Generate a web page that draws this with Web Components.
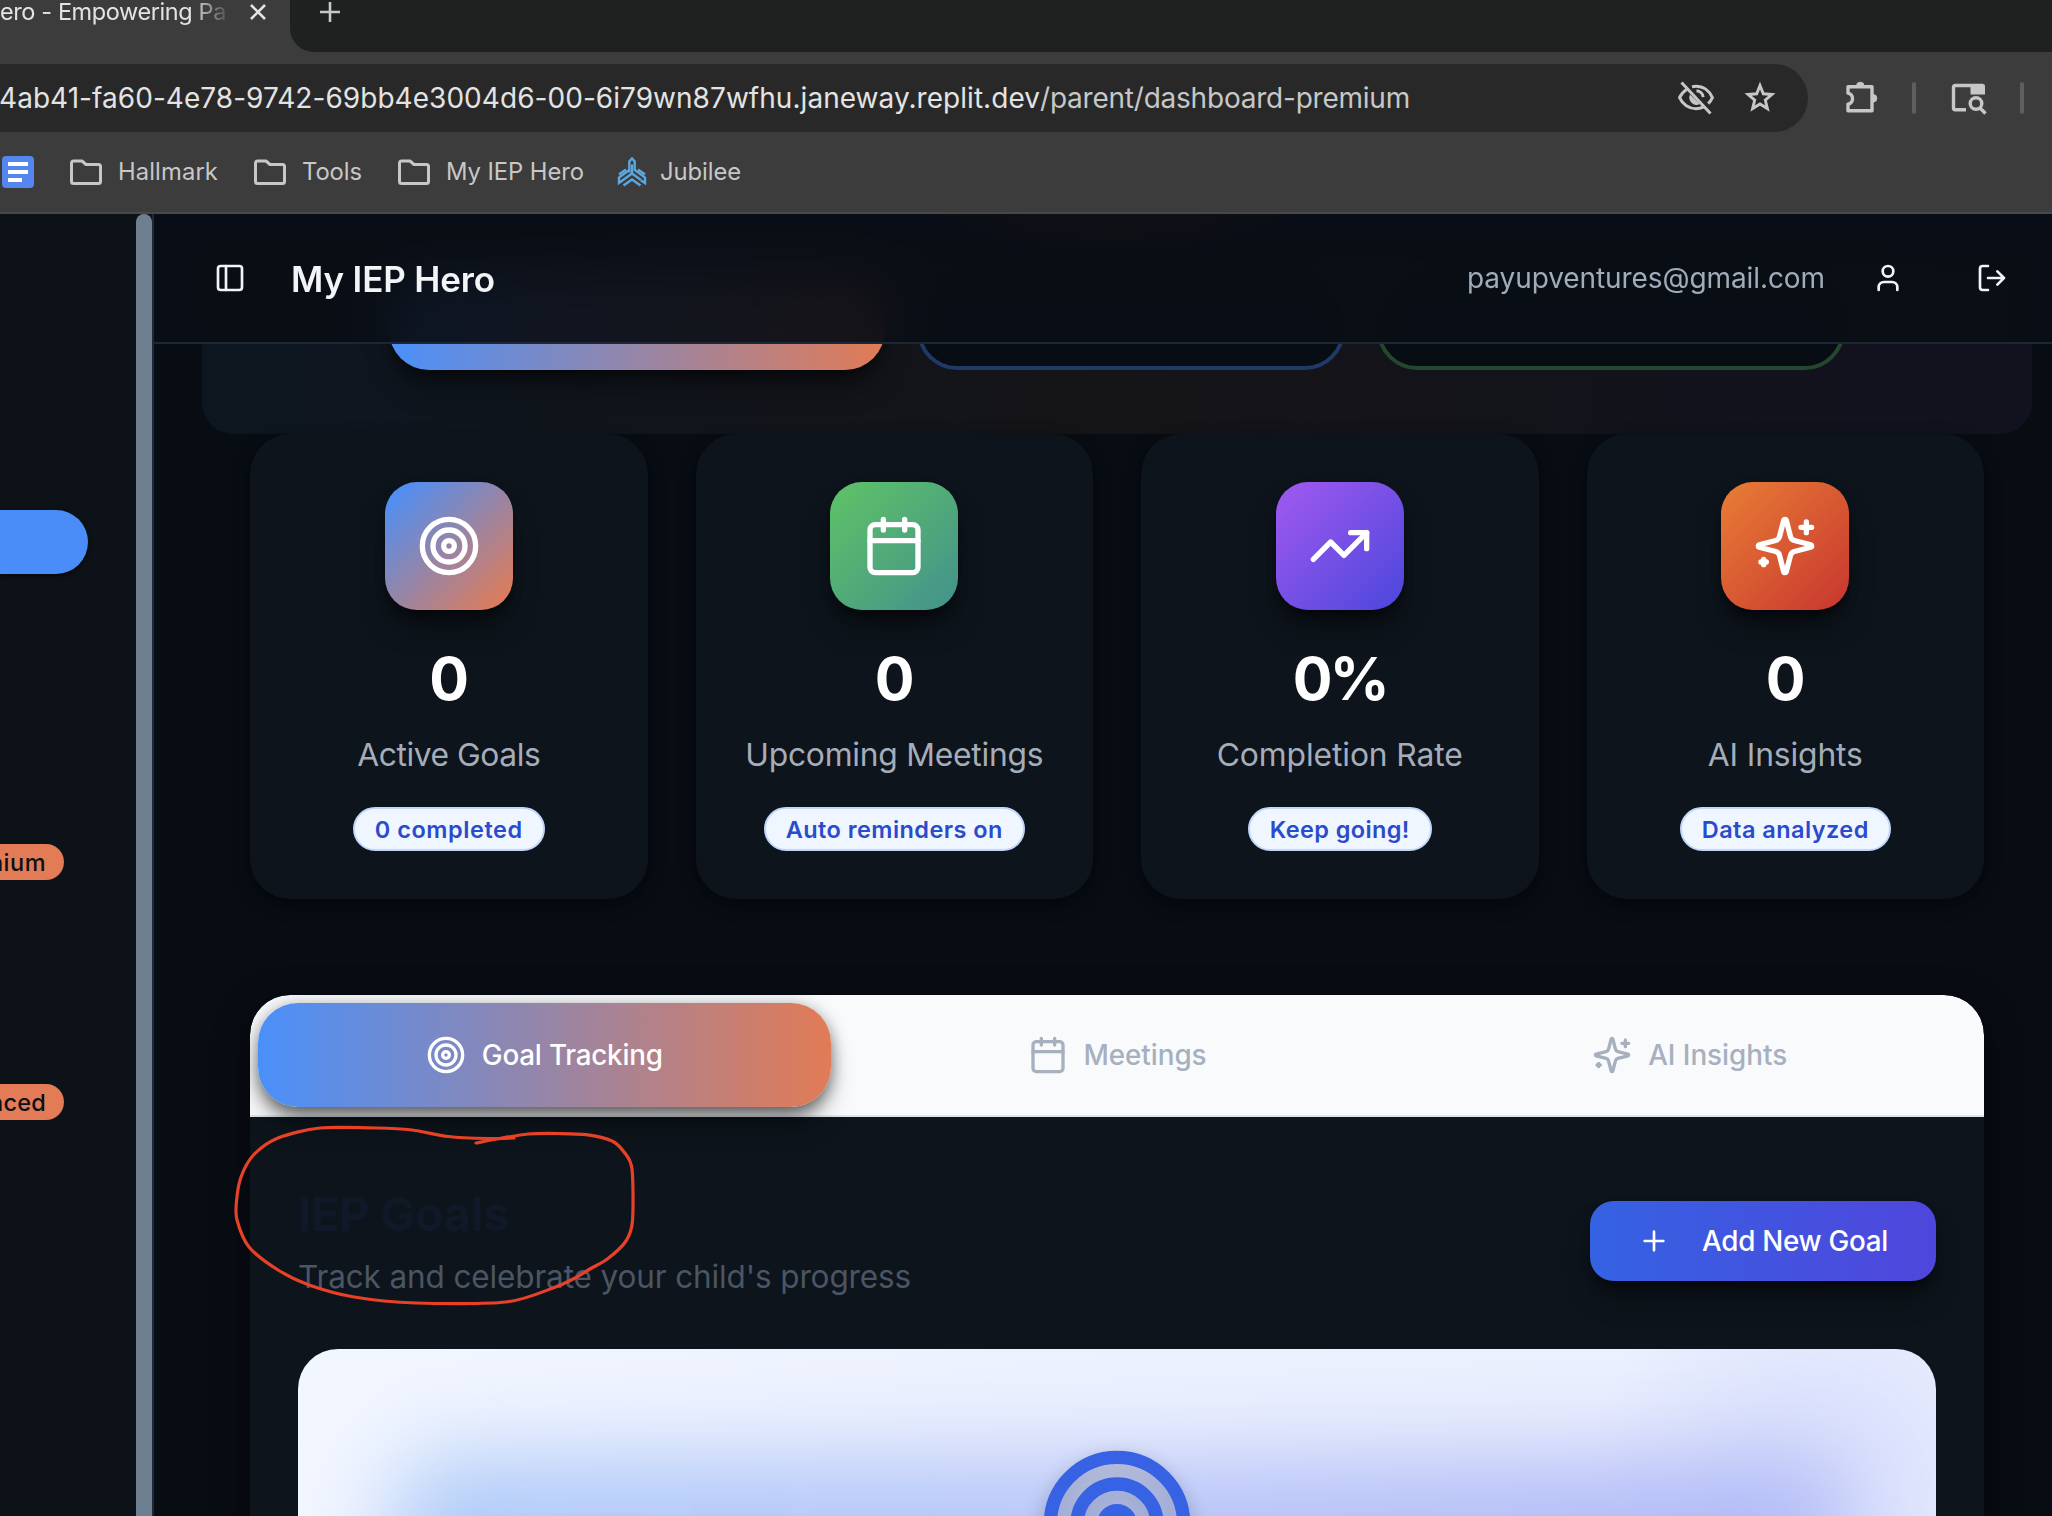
<!DOCTYPE html>
<html lang="en">
<head>
<meta charset="utf-8">
<title>My IEP Hero - Empowering Parents</title>
<style>
html,body{margin:0;padding:0}
body{width:2052px;height:1516px;overflow:hidden;background:#080d14;font-family:Inter,"Liberation Sans",sans-serif;}
</style>
</head>
<body>
<app-window></app-window>
<script>
const define = (name, html, setup) => {
  const t = document.createElement('template');
  t.innerHTML = html;
  customElements.define(name, class extends HTMLElement {
    connectedCallback() {
      if (this.shadowRoot) return;
      this.attachShadow({ mode: 'open' }).append(t.content.cloneNode(true));
      if (setup) setup(this, this.shadowRoot);
    }
  });
};

/* icon set: outline icons on a 24-unit grid */
const ICONS = {
  target: '<circle cx="12" cy="12" r="10"/><circle cx="12" cy="12" r="6"/><circle cx="12" cy="12" r="2"/>',
  calendar: '<path d="M8 2v4M16 2v4"/><rect width="18" height="18" x="3" y="4" rx="2"/><path d="M3 10h18"/>',
  trend: '<path d="M22 7 13.5 15.5 8.5 10.5 2 17"/><path d="M16 7h6v6"/>',
  sparkles: '<path d="M9.937 15.5A2 2 0 0 0 8.5 14.063l-6.135-1.582a.5.5 0 0 1 0-.962L8.5 9.936A2 2 0 0 0 9.937 8.5l1.582-6.135a.5.5 0 0 1 .963 0L14.063 8.5A2 2 0 0 0 15.5 9.937l6.135 1.581a.5.5 0 0 1 0 .964L15.5 14.063a2 2 0 0 0-1.437 1.437l-1.582 6.135a.5.5 0 0 1-.963 0z"/><path d="M20 3v4M22 5h-4M4 17v2M5 18H3"/>',
  panel: '<rect width="18" height="18" x="3" y="3" rx="2"/><path d="M9 3v18"/>',
  user: '<path d="M19 21v-2a4 4 0 0 0-4-4H9a4 4 0 0 0-4 4v2"/><circle cx="12" cy="7" r="4"/>',
  logout: '<path d="M9 21H5a2 2 0 0 1-2-2V5a2 2 0 0 1 2-2h4"/><path d="m16 17 5-5-5-5M21 12H9"/>',
  plus: '<path d="M5 12h14M12 5v14"/>'
};

define('line-icon', `<style>:host{display:block;flex:none}svg{display:block;width:100%;height:100%}</style>
<svg viewBox="0 0 24 24" fill="none" stroke="currentColor" stroke-width="2" stroke-linecap="round" stroke-linejoin="round"></svg>`,
(el, r) => { const s = el.getAttribute('size'); el.style.width = el.style.height = s + 'px'; r.querySelector('svg').innerHTML = ICONS[el.getAttribute('name')]; });

define('browser-tabs', `<style>
:host{display:flex;height:52px;background:#3c3c3c;color:#e3e3e3}
.tab{width:290px;display:flex;align-items:center;height:24px}
.t{width:226px;display:flex;justify-content:flex-end;overflow:hidden;font-size:23.500px;line-height:30px;white-space:nowrap;-webkit-mask:linear-gradient(90deg,#000 190px,transparent 232px);mask:linear-gradient(90deg,#000 190px,transparent 232px)}
.x{width:18px;height:18px;margin-left:23px}
.rest{flex:1;background:#1f2120;border-bottom-left-radius:24px}
.p{display:block;width:22px;height:22px;margin:1px 0 0 29px}
</style>
<div class="tab"><div class="t"><ui-fit w="226">ero - Empowering Pa</ui-fit></div>
<svg class="x" viewBox="0 0 18 18" stroke="#e3e3e3" stroke-width="2.6"><path d="M2 2l14 14M16 2L2 16"/></svg></div>
<div class="rest"><svg class="p" viewBox="0 0 22 22" stroke="#c7c7c7" stroke-width="2.6"><path d="M11 1v20M1 11h20"/></svg></div>`);

define('browser-toolbar', `<style>
:host{display:flex;align-items:center;height:68px;padding:12px 0;background:#3c3c3c;color:#c7c7c7}
.omni{box-sizing:border-box;width:1808px;height:68px;background:#282828;border-radius:0 34px 34px 0;display:flex;align-items:center;font-size:28px;white-space:nowrap;color:#e3e3e3;flex:none}
.omni ui-fit:first-child{margin-left:-1px}
.path{color:#c7c7c7}
svg{display:block;flex:none;overflow:visible}
.eye{margin-left:268px}.star{margin-left:30px}
.sep{width:4px;height:32px;border-radius:2px;background:#5f5f5f}
</style>
<div class="omni"><ui-fit w="1041">4ab41-fa60-4e78-9742-69bb4e3004d6-00-6i79wn87wfhu.janeway.replit.dev</ui-fit><ui-fit class="path" w="370">/parent/dashboard-premium</ui-fit>
<svg class="eye" width="36" height="36" viewBox="0 0 36 36" fill="none" stroke="#c7c7c7" stroke-width="3"><path d="M8.500 9.500C5 12 2.800 14.800 1.600 17.600c3 7 9.500 11.200 16.400 11.200 2.600 0 5.100-.6 7.300-1.600"/><path d="M14 6.800c1.300-.3 2.600-.5 4-.5 7 0 13.300 4.300 16.400 11.300-1 2.300-2.400 4.400-4.200 6.100"/><path d="M18.500 10.700c3.700.3 6.400 3 6.700 6.500"/><path d="M12 14.500a7.300 7.300 0 0 0 9.800 9.600z" fill="#c7c7c7" stroke="none"/><path d="M3.500 2.500l29 31"/></svg>
<svg class="star" width="32" height="32" viewBox="0 0 32 32" fill="none" stroke="#c7c7c7" stroke-width="2.900"><path d="M16 3.500l3.300 8.300 8.600.7-6.600 5.600 2.100 8.500-7.400-4.600-7.400 4.600 2.100-8.500-6.600-5.600 8.600-.7z"/></svg></div>
<svg width="36" height="36" viewBox="0 0 36 36" fill="none" stroke="#c7c7c7" stroke-width="3.400" stroke-linejoin="round" style="margin-left:35px"><path d="M5 6.700h24v24H5v-6.500c6-1.500 6-9.500 0-11z"/><path d="M13.500 6a3.800 3.800 0 0 1 7.600 0zM30 14.500a3.800 3.800 0 0 1 0 7.600z" fill="#c7c7c7" stroke-width="1"/></svg>
<div class="sep" style="margin-left:33px"></div>
<svg width="36" height="36" viewBox="0 0 36 36" fill="none" stroke="#c7c7c7" stroke-width="3.400" style="margin-left:34px"><path d="M16 29.800H5.200a1.700 1.700 0 0 1-1.700-1.700V7.200a1.700 1.700 0 0 1 1.700-1.700H33"/><path d="M20.500 4H33a2 2 0 0 1 2 2v8.500H20.500z" fill="#c7c7c7" stroke="none"/><circle cx="26" cy="23.500" r="5.800"/><path d="M30 28l5.500 5.500"/></svg>
<div class="sep" style="margin-left:34px"></div>`);

define('bookmark-folder', `<style>:host{display:flex;align-items:center;gap:16px}svg{display:block;flex:none}</style>
<svg width="32" height="26" viewBox="0 0 32 26" fill="none" stroke="#c7c7c7" stroke-width="3" stroke-linejoin="round"><path d="M3.500 2h8.500l4 3.500h12.500a2 2 0 0 1 2 2V22.500a2 2 0 0 1-2 2H3.500a2 2 0 0 1-2-2V4a2 2 0 0 1 2-2z"/></svg><slot></slot>`);

define('bookmarks-bar', `<style>
:host{display:flex;align-items:center;box-sizing:border-box;height:70px;padding:0 0 12px 2px;background:#3c3c3c;border-bottom:2px solid #484848;color:#c7c7c7;font-size:23.800px;line-height:30px;white-space:nowrap}
.docs{width:32px;height:32px;border-radius:4px;background:#5586ed;display:flex;flex-direction:column;justify-content:center;gap:4px;margin-right:36px;box-sizing:border-box;padding-left:6px}
.docs i{display:block;width:20px;height:4px;background:#fff}.docs i:last-child{width:14px}
bookmark-folder{margin-right:36px}
</style>
<div class="docs"><i></i><i></i><i></i></div>
<bookmark-folder><ui-fit w="100">Hallmark</ui-fit></bookmark-folder>
<bookmark-folder><ui-fit w="60">Tools</ui-fit></bookmark-folder>
<bookmark-folder style="margin-right:33px"><ui-fit w="138">My IEP Hero</ui-fit></bookmark-folder>
<svg width="30" height="30" viewBox="0 0 30 30" fill="none" stroke="#5ba7e0" stroke-width="2.400"><path d="M12.300 15.500V4.500L15 1.500l2.700 3V13L28 20.500V26l-4-2.500"/><path d="M12.300 13L2 20.500V26l13-9.500 9 6.500"/><path d="M6.500 28.500L15 22.500l8.500 6M15 7.500v10M2 17.500l7-5M28 17.500l-7-5"/></svg>
<ui-fit w="81" style="margin-left:13px">Jubilee</ui-fit>`);

define('side-nav', `<style>
:host{display:flex;flex:none;width:154px;box-sizing:border-box;border-right:2px solid #1c2938;background:#0d1218}
.list{width:136px;display:flex;flex-direction:column;overflow:hidden;padding-top:296px;align-items:flex-start}
.active{width:88px;height:64px;background:#4a8df8;border-radius:0 32px 32px 0;box-shadow:0 2px 5px #0009;flex:none}
.tag{box-sizing:border-box;width:64px;height:36px;flex:none;border-radius:0 18px 18px 0;background:#e27b56;color:#0b1017;display:flex;justify-content:flex-end;align-items:center;padding-right:18px;font-size:23.500px;font-weight:500;overflow:hidden;white-space:nowrap}
.bar{width:16px;background:#6e7f90;border-radius:8px 8px 0 0}
</style>
<div class="list"><div class="active"></div><div class="tag" style="margin-top:270px"><ui-fit w="57">nium</ui-fit></div><div class="tag" style="margin-top:204px"><ui-fit w="57">nced</ui-fit></div></div>
<div class="bar"></div>`);

define('app-header', `<style>
:host{display:flex;align-items:center;box-sizing:border-box;height:130px;flex:none;position:relative;z-index:2;padding:0 44px 0 60px;border-bottom:2px solid #1b2735;background:radial-gradient(ellipse 190px 40px at 960px 0,#14131677 40%,transparent),rgba(10,14,21,.94);backdrop-filter:blur(24px);color:#f3f4f6}
h1{margin:0 auto 0 45px;font-size:35px;font-weight:600;line-height:48px;padding-top:1px;white-space:nowrap}
.mail{font-size:28px;color:#a1acba;margin-right:47px;white-space:nowrap}
</style>
<line-icon name="panel" size="32"></line-icon><h1><ui-fit w="204">My IEP Hero</ui-fit></h1>
<ui-fit class="mail" w="358">payupventures@gmail.com</ui-fit>
<line-icon name="user" size="32" style="margin-right:72px"></line-icon><line-icon name="logout" size="32"></line-icon>`);

define('hero-panel', `<style>
:host{display:flex;align-items:flex-end;justify-content:center;gap:32px;box-sizing:border-box;height:190px;margin:-100px 20px 0 48px;padding-bottom:64px;flex:none;border-radius:0 0 32px 32px;background:linear-gradient(90deg,#0d1620,#151417 50%,#11121f)}
div{box-sizing:border-box;height:96px;border-radius:40px}
.a{width:496px;background:linear-gradient(90deg,#4a90fa,#e27b56);box-shadow:0 20px 30px -6px #0006,0 8px 12px -4px #0007}
.b{width:428px;border:4px solid #1f3a66;background:#080d14}
.c{width:468px;border:4px solid #25462f;background:#080d14}
</style><div class="a"></div><div class="b"></div><div class="c"></div>`);

define('stat-card', `<style>
:host{display:flex;flex:1;flex-direction:column;align-items:center;box-sizing:border-box;height:465px;padding:48px 0;border-radius:40px;background:#0d141b;box-shadow:0 6px 18px #0007}
.ic{width:128px;height:128px;border-radius:32px;display:flex;align-items:center;justify-content:center;color:#fff;box-shadow:0 20px 30px -6px #0006,0 8px 12px -4px #0008}
.num{margin-top:33px;line-height:72px;font-size:59px;font-weight:700;color:#fff}
.lab{margin-top:16px;line-height:48px;font-size:31.800px;color:#a5adba;white-space:nowrap}
.tag{margin-top:28px;box-sizing:border-box;height:44px;display:flex;align-items:center;padding:0 20px;border:2px solid #bfd7fb;border-radius:22px;background:#eff6ff;color:#2a4bcb;font-size:23.500px;font-weight:600;white-space:nowrap}
</style>
<div class="ic"><line-icon size="64"></line-icon></div><div class="num"><slot name="num"></slot></div><div class="lab"><slot name="label"></slot></div><div class="tag"><slot name="tag"></slot></div>`,
(el, r) => { r.querySelector('.ic').style.background = `linear-gradient(135deg,${el.getAttribute('from')},${el.getAttribute('to')})`;
  const n = document.createElement('line-icon'); n.setAttribute('size', 64); n.setAttribute('name', el.getAttribute('icon')); r.querySelector('line-icon').replaceWith(n); });

define('stat-row', `<style>:host{display:flex;gap:48px;margin:0 68px 0 96px;flex:none}</style>
<stat-card icon="target" from="#4a8ff8 5%" to="#e27b56 95%"><ui-fit slot="num" w="39">0</ui-fit><ui-fit slot="label" w="183">Active Goals</ui-fit><ui-fit slot="tag" w="148">0 completed</ui-fit></stat-card>
<stat-card icon="calendar" from="#5fc366" to="#43918c"><ui-fit slot="num" w="39">0</ui-fit><ui-fit slot="label" w="298">Upcoming Meetings</ui-fit><ui-fit slot="tag" w="217">Auto reminders on</ui-fit></stat-card>
<stat-card icon="trend" from="#a259f0" to="#4b47dc"><ui-fit slot="num" w="94">0%</ui-fit><ui-fit slot="label" w="246">Completion Rate</ui-fit><ui-fit slot="tag" w="140">Keep going!</ui-fit></stat-card>
<stat-card icon="sparkles" from="#e87d35" to="#c8362f"><ui-fit slot="num" w="39">0</ui-fit><ui-fit slot="label" w="155">AI Insights</ui-fit><ui-fit slot="tag" w="167">Data analyzed</ui-fit></stat-card>`);

define('panel-tab', `<style>
:host{display:flex;flex:1;align-items:center;justify-content:center;gap:16px;height:104px;border-radius:40px;font-size:27.800px;font-weight:500;color:#a6b0bf;white-space:nowrap}
:host([active]){background:linear-gradient(90deg,#4a90fa,#e27b56);color:#fff;box-shadow:0 20px 30px -6px #0005,0 8px 16px -2px #0006,0 0 18px #0003}
</style><slot></slot>`);

define('empty-state', `<style>
:host{display:flex;justify-content:center;height:260px;overflow:hidden;box-sizing:border-box;padding-top:95px;margin:0 48px;border-radius:40px 40px 0 0;
background:radial-gradient(ellipse 230px 220px at 1520px 130px,#c5cffa77 10%,transparent),linear-gradient(90deg,#f2f6ff,#edf1fe 50%,#eaeefe);isolation:isolate;position:relative}
.glow{position:absolute;z-index:-1;inset:108px 92px -150px 92px;border-radius:60px;background:linear-gradient(90deg,#aecbf8,#b8c5f8 50%,#b0b9f6);filter:blur(44px)}
line-icon{color:#3762e3;filter:drop-shadow(0 8px 10px #0004)}
</style><div class="glow"></div><line-icon name="target" size="160"></line-icon>`);

define('goal-panel', `<style>
:host{display:block;flex:none;height:560px;margin:96px 68px 0 96px;border-radius:40px 40px 0 0;background:#0d141b;box-shadow:0 10px 34px #0009}
.tabs{display:flex;box-sizing:border-box;height:122px;padding:8px;border-bottom:2px solid #dfe4eb;border-radius:40px 40px 0 0;background:#f9fafc}
.clip{overflow:hidden;border-radius:40px 40px 0 0;height:354px}
.head{display:flex;justify-content:space-between;align-items:flex-start;padding:61px 48px 0 48px}
h2{margin:0;font-size:47px;line-height:72px;font-weight:700;color:#111827;white-space:nowrap}
p{margin:3px 0 0;font-size:31.500px;line-height:48px;color:#4b5563;white-space:nowrap}
button{all:unset;box-sizing:border-box;width:346px;height:80px;margin-top:23px;padding-left:48px;display:flex;align-items:center;gap:32px;border-radius:24px;background:linear-gradient(90deg,#3562e3,#4f46dc);color:#fff;font-size:27.800px;font-weight:500;white-space:nowrap;box-shadow:0 20px 30px -6px #0005,0 8px 12px -4px #0008}
</style>
<div class="clip"><div class="tabs">
<panel-tab active><line-icon name="target" size="40"></line-icon><ui-fit w="181">Goal Tracking</ui-fit></panel-tab>
<panel-tab><line-icon name="calendar" size="40"></line-icon><ui-fit w="123">Meetings</ui-fit></panel-tab>
<panel-tab><line-icon name="sparkles" size="40"></line-icon><ui-fit w="139">AI Insights</ui-fit></panel-tab></div>
<div class="head"><div><h2><ui-fit w="211">IEP Goals</ui-fit></h2><p><ui-fit w="613">Track and celebrate your child's progress</ui-fit></p></div>
<button><line-icon name="plus" size="32"></line-icon><ui-fit w="186">Add New Goal</ui-fit></button></div></div>
<empty-state></empty-state>`);

define('pen-mark', `<style>:host{position:absolute;left:0;top:0;width:2052px;height:1516px;z-index:5;pointer-events:none}svg{display:block}</style>
<svg width="2052" height="1516" fill="none" stroke="#e94126" stroke-width="3.200" stroke-linecap="round" stroke-linejoin="round"><path/></svg>`,
(el, r) => {
  const p = [[476,1143],[497,1139],[528,1134],[559,1133.500],[586,1134.700],[612,1141],[624,1152],[632,1169],[632.500,1221],[626,1241],[608,1258.500],[590,1269],[573,1279],[553,1288],[506,1302],[416,1303],[354,1297],[309,1285],[278,1270],[249,1247],[237,1220],[236.500,1201],[241,1177],[253.500,1155],[278,1138],[320,1128],[376,1128],[412,1130],[448,1136.500],[488,1138.500],[514,1138]];
  let d = `M${p[0]}`;
  for (let i = 0; i < p.length - 1; i++) {
    const a = p[i - 1] || p[i], b = p[i], c = p[i + 1], e = p[i + 2] || c, k = 7;
    d += `C${b[0] + (c[0] - a[0]) / k},${b[1] + (c[1] - a[1]) / k} ${c[0] - (e[0] - b[0]) / k},${c[1] - (e[1] - b[1]) / k} ${c}`;
  }
  r.querySelector('path').setAttribute('d', d);
});

define('app-window', `<style>
:host{display:flex;flex-direction:column;width:2052px;height:1516px;overflow:hidden;position:relative}
.body{display:flex;flex:1;min-height:0}
main{flex:1;min-width:0;display:flex;flex-direction:column;overflow:hidden;background:#080d14}
</style>
<browser-tabs></browser-tabs><browser-toolbar></browser-toolbar><bookmarks-bar></bookmarks-bar>
<div class="body"><side-nav></side-nav><main><app-header></app-header><hero-panel></hero-panel><stat-row></stat-row><goal-panel></goal-panel></main></div>
<pen-mark></pen-mark>`);

/* text run whose tracking is set so that its advance equals the w attribute;
   registered last, so every style it inherits is already in place */
define('ui-fit', `<style>:host{display:inline-block;flex:none;white-space:nowrap}</style><slot></slot>`,
el => { const n = el.getBoundingClientRect().width; el.style.letterSpacing = ((+el.getAttribute('w') - n) / el.textContent.length).toFixed(3) + 'px'; });
</script>
</body>
</html>
